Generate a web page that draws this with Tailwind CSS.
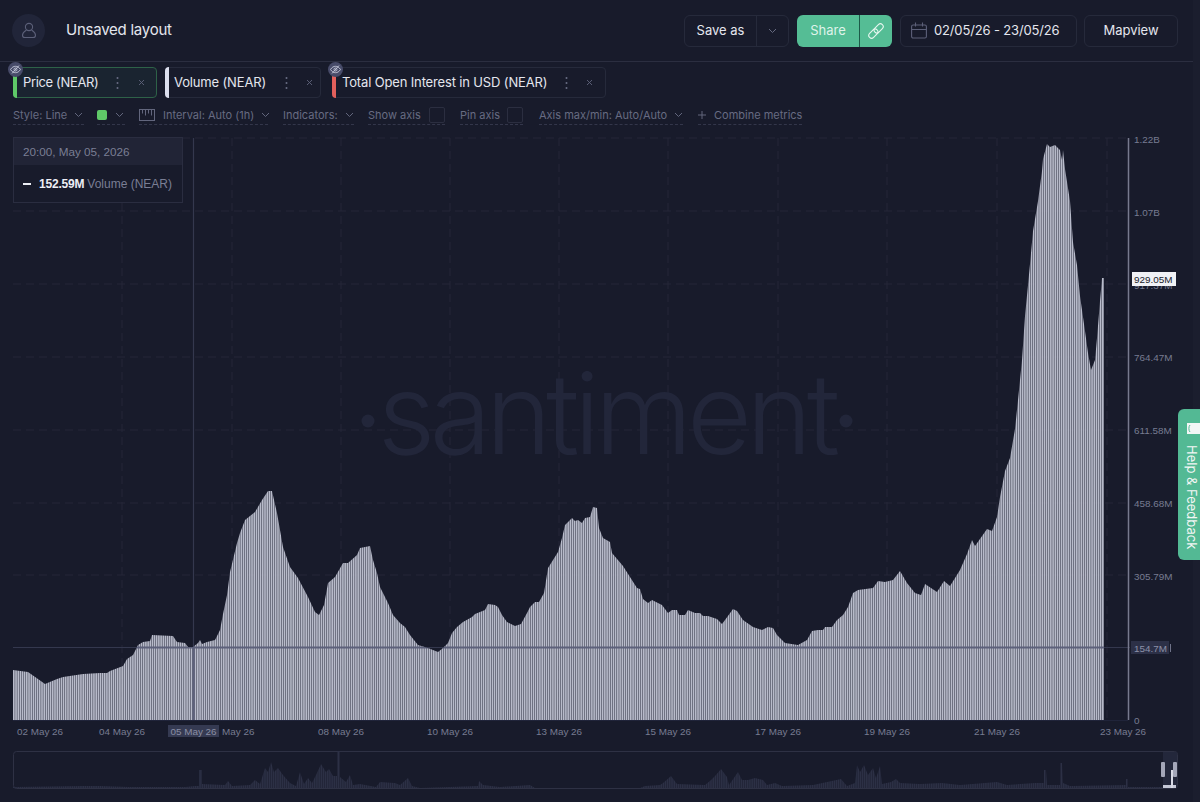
<!DOCTYPE html>
<html>
<head>
<meta charset="utf-8">
<script src="https://cdn.jsdelivr.net/npm/@tailwindcss/browser@4"></script>
</head>
<body class="bg-[#181b2b] overflow-hidden font-['Inter',sans-serif]">
<div class="relative w-[1200px] h-[802px] overflow-hidden flex flex-col">

  <!-- header -->
  <header class="h-[62px] shrink-0 flex items-center pl-[12px] pr-[22px] border-b border-[#2b2e40]">
    <div class="w-[33px] h-[33px] rounded-full bg-[#212539] flex items-center justify-center">
      <svg width="16" height="17" viewBox="0 0 16 17" fill="none" stroke="#5c6079" stroke-width="1.1"><circle cx="8" cy="5" r="3.6"/><path d="M5.4 8C3.6 9.2 1.5 11 1.5 13.2c0 1.4 1 2.3 2.4 2.3h8.2c1.4 0 2.4-.9 2.4-2.3C14.500 11 12.400 9.200 10.600 8"/></svg>
    </div>
    <span class="ml-[21px] text-[15px] text-[#e4e6ee] tracking-[-0.25px]">Unsaved layout</span>
    <div class="ml-auto flex items-center">
      <div class="flex h-[32px] w-[105px] border border-[#262a3b] rounded-[6px] text-[13px] text-[#e4e6ee]">
        <div class="w-[72px] flex items-center justify-center border-r border-[#262a3b]">Save as</div>
        <div class="flex-1 flex items-center justify-center">
          <svg width="9" height="6" viewBox="0 0 9 6" fill="none" stroke="#666a80" stroke-width="1"><path d="M1 1l3.500 3.500L8 1"/></svg>
        </div>
      </div>
      <div class="ml-[8px] flex h-[32px] w-[95px] rounded-[6px] overflow-hidden bg-[#55bd95]">
        <div class="w-[63px] flex items-center justify-center text-[13px] text-[#dff3ea] border-r border-[#1c5a48]">Share</div>
        <div class="flex-1 flex items-center justify-center">
          <svg width="18" height="18" viewBox="0 0 18 18" fill="none" stroke="#e6f6ef" stroke-width="1.100"><g transform="rotate(-45 9 9)"><rect x="0" y="6.200" width="10.500" height="5.600" rx="2.800"/><rect x="7.500" y="6.200" width="10.500" height="5.600" rx="2.800"/></g></svg>
        </div>
      </div>
      <div class="ml-[8px] flex items-center h-[32px] w-[177px] border border-[#262a3b] rounded-[6px] pl-[10px]">
        <svg width="16" height="17" viewBox="0 0 16 17" fill="none" stroke="#5c6079" stroke-width="1.1"><rect x="0.600" y="3" width="14.800" height="13" rx="1.500"/><path d="M0.600 7.500h14.800M4.500 0.500v4M11.500 0.500v4"/></svg>
        <span class="ml-[7px] text-[13px] tracking-[-0.15px] text-[#e4e6ee]">02/05/26 - 23/05/26</span>
      </div>
      <div class="ml-[7px] flex items-center justify-center h-[32px] w-[94px] border border-[#262a3b] rounded-[6px] text-[13px] text-[#e4e6ee]">Mapview</div>
    </div>
  </header>

  <!-- metric tabs -->
  <div class="h-[36px] shrink-0 flex items-end pl-[13px] text-[13px] text-[#e4e6ee]">
    <div class="relative h-[31px] w-[144px] mr-[8px] flex items-center pl-[9px] border border-[#2e6248] rounded-[4px] bg-[#1a2430]">
      <span class="absolute -left-px -top-px -bottom-px w-[4px] rounded-l-[4px] bg-[#5fc968]"></span>
      <span class="tracking-[-0.35px]">Price (NEAR)</span>
      <svg class="absolute left-[102px] top-[8px]" width="3" height="14" viewBox="0 0 3 14" fill="#696d84"><circle cx="1.500" cy="2" r="1"/><circle cx="1.500" cy="7" r="1"/><circle cx="1.500" cy="12" r="1"/></svg>
      <svg class="absolute left-[124px] top-[11px]" width="7" height="7" viewBox="0 0 7 7" stroke="#5f637a" stroke-width="0.900"><path d="M1 1l5 5M6 1l-5 5"/></svg>
      <span class="absolute -left-[6px] -top-[6px] w-[15px] h-[15px] rounded-full bg-[#474b69] flex items-center justify-center">
        <svg width="11" height="9" viewBox="0 0 11 9" fill="none" stroke="#c5c8da" stroke-width="0.900"><path d="M0.500 4.500C2 2.200 3.700 1.300 5.500 1.300S9 2.200 10.500 4.500C9 6.800 7.300 7.700 5.500 7.700S2 6.800 0.500 4.500Z"/><circle cx="5.500" cy="4.500" r="1.500"/><path d="M9 0.500L2 8.500"/></svg>
      </span>
    </div>
    <div class="relative h-[31px] w-[156px] mr-[11px] flex items-center pl-[8px] border border-[#262a3b] rounded-[4px]">
      <span class="absolute -left-px -top-px -bottom-px w-[4px] rounded-l-[4px] bg-[#dcdfee]"></span>
      <span class="tracking-[-0.15px]">Volume (NEAR)</span>
      <svg class="absolute left-[119px] top-[8px]" width="3" height="14" viewBox="0 0 3 14" fill="#696d84"><circle cx="1.500" cy="2" r="1"/><circle cx="1.500" cy="7" r="1"/><circle cx="1.500" cy="12" r="1"/></svg>
      <svg class="absolute left-[140px] top-[11px]" width="7" height="7" viewBox="0 0 7 7" stroke="#5f637a" stroke-width="0.900"><path d="M1 1l5 5M6 1l-5 5"/></svg>
    </div>
    <div class="relative h-[31px] w-[274px] flex items-center pl-[9px] border border-[#262a3b] rounded-[4px]">
      <span class="absolute -left-px -top-px -bottom-px w-[4px] rounded-l-[4px] bg-[#e2605c]"></span>
      <span class="tracking-[-0.15px] whitespace-nowrap">Total Open Interest in USD (NEAR)</span>
      <svg class="absolute left-[232px] top-[8px]" width="3" height="14" viewBox="0 0 3 14" fill="#696d84"><circle cx="1.500" cy="2" r="1"/><circle cx="1.500" cy="7" r="1"/><circle cx="1.500" cy="12" r="1"/></svg>
      <svg class="absolute left-[253px] top-[11px]" width="7" height="7" viewBox="0 0 7 7" stroke="#5f637a" stroke-width="0.900"><path d="M1 1l5 5M6 1l-5 5"/></svg>
      <span class="absolute -left-[5px] -top-[6px] w-[15px] h-[15px] rounded-full bg-[#474b69] flex items-center justify-center">
        <svg width="11" height="9" viewBox="0 0 11 9" fill="none" stroke="#c5c8da" stroke-width="0.900"><path d="M0.500 4.500C2 2.200 3.700 1.300 5.500 1.300S9 2.200 10.500 4.500C9 6.800 7.300 7.700 5.500 7.700S2 6.800 0.500 4.500Z"/><circle cx="5.500" cy="4.500" r="1.500"/><path d="M9 0.500L2 8.500"/></svg>
      </span>
    </div>
  </div>

  <!-- settings row -->
  <div class="h-[30px] shrink-0 flex items-start pt-[8px] pl-[13px] text-[11px] leading-[17px] text-[#676b82] whitespace-nowrap">
    <div class="h-[19px] w-[71px] flex items-center gap-[7px] border-b border-dashed border-[#33364a]"><span>Style: Line</span>
      <svg class="shrink-0" width="9" height="6" viewBox="0 0 9 6" fill="none" stroke="#62667d" stroke-width="1"><path d="M1 1l3.500 3.500L8 1"/></svg></div>
    <div class="ml-[13px] h-[19px] w-[28px] flex items-center gap-[8px] border-b border-dashed border-[#33364a]"><span class="w-[10px] h-[10px] shrink-0 rounded-[2px] bg-[#5fc968]"></span>
      <svg class="shrink-0" width="9" height="6" viewBox="0 0 9 6" fill="none" stroke="#62667d" stroke-width="1"><path d="M1 1l3.500 3.500L8 1"/></svg></div>
    <div class="ml-[14px] h-[19px] w-[129px] flex items-center border-b border-dashed border-[#33364a]">
      <svg class="shrink-0" width="16" height="12" viewBox="0 0 16 12" fill="none" stroke="#62667d" stroke-width="1"><rect x="0.500" y="0.500" width="15" height="11"/><path d="M3.500 0.500v4M6.500 0.500v6M9.500 0.500v4M12.500 0.500v6"/></svg>
      <span class="ml-[8px]">Interval: Auto (1h)</span>
      <svg class="ml-[7px] shrink-0" width="9" height="6" viewBox="0 0 9 6" fill="none" stroke="#62667d" stroke-width="1"><path d="M1 1l3.500 3.500L8 1"/></svg></div>
    <div class="ml-[15px] h-[19px] w-[71px] flex items-center gap-[7px] border-b border-dashed border-[#33364a]"><span>Indicators:</span>
      <svg class="shrink-0" width="9" height="6" viewBox="0 0 9 6" fill="none" stroke="#62667d" stroke-width="1"><path d="M1 1l3.500 3.500L8 1"/></svg></div>
    <div class="ml-[14px] h-[19px] w-[77px] flex items-center justify-between border-b border-dashed border-[#33364a]"><span>Show axis</span><span class="w-[16px] h-[16px] shrink-0 border border-[#2b2e40] rounded-[2px]"></span></div>
    <div class="ml-[15px] h-[19px] w-[63px] flex items-center justify-between border-b border-dashed border-[#33364a]"><span>Pin axis</span><span class="w-[16px] h-[16px] shrink-0 border border-[#2b2e40] rounded-[2px]"></span></div>
    <div class="ml-[16px] h-[19px] w-[144px] flex items-center gap-[7px] border-b border-dashed border-[#33364a]"><span>Axis max/min: Auto/Auto</span>
      <svg class="shrink-0" width="9" height="6" viewBox="0 0 9 6" fill="none" stroke="#62667d" stroke-width="1"><path d="M1 1l3.500 3.500L8 1"/></svg></div>
    <div class="ml-[15px] h-[19px] w-[104px] flex items-center gap-[8px] border-b border-dashed border-[#33364a]">
      <svg class="shrink-0" width="8" height="8" viewBox="0 0 8 8" stroke="#62667d" stroke-width="1"><path d="M4 0v8M0 4h8"/></svg><span>Combine metrics</span></div>
  </div>

  <!-- chart -->
  <div class="relative flex-1">
    <svg class="absolute inset-0" width="1200" height="674" viewBox="0 128 1200 674">
      <defs>
        <clipPath id="vol"><polygon points="13,720 13,670 28,672 38,679 45,684 57,679 63,677 83,674 100,673 107,673 110,671 123,666 127,659 133,655 138,645 143,642 150,641 152,635 173,636 177,642 185,643 188,647 193,647 198,643 200,640 202,644 207,642 215,640 220,630 223,614 227,595 230,572 237,543 240,533 245,520 255,512 262,500 268,491 272,491 277,513 283,547 290,567 298,578 308,597 315,612 319,615 324,605 328,583 335,577 343,563 348,563 357,555 360,548 370,546 373,560 377,573 380,587 388,603 393,615 400,623 405,627 410,635 418,645 428,648 438,652 443,648 448,643 452,633 457,627 463,622 472,617 475,614 485,610 488,604 495,605 498,607 502,615 507,622 515,626 521,624 527,613 530,607 535,602 539,602 544,593 548,568 553,560 558,552 562,538 565,525 572,518 575,521 578,520 582,523 585,518 590,517 593,507 597,508 599,528 603,538 610,542 612,553 623,566 630,577 637,588 640,589 643,599 648,603 652,600 662,605 668,613 672,610 677,610 679,615 685,615 688,610 695,613 700,613 703,616 708,616 717,619 722,624 725,620 733,609 737,611 743,620 753,627 762,630 768,627 773,628 777,635 785,643 798,645 807,640 812,631 818,630 823,630 825,627 832,627 837,620 843,615 848,607 853,593 858,590 873,588 878,581 885,582 893,580 900,571 907,583 915,593 921,595 925,584 937,592 944,581 950,586 960,570 967,554 972,540 975,546 987,529 992,531 997,517 1000,497 1005,471 1010,458 1015,429 1018,400 1022,360 1025,316 1028,285 1030,264 1033,231 1038,201 1042,171 1043,159 1047,144 1050,147 1055,145 1060,150 1062,160 1063,150 1065,169 1070,201 1073,242 1077,265 1080,296 1085,331 1088,353 1091,370 1095,360 1097,338 1100,301 1102,278 1104,278 1104,720"/></clipPath>
        <clipPath id="mini"><polygon points="13,788 13,787 83,786 100,786 130,787 185,787 195,786 199,786 199,770 202,770 202,784 225,785 228,781 232,786 250,785 255,780 260,784 265,768 268,772 271,762 274,772 278,768 283,775 290,783 296,786 300,772 304,784 308,778 312,783 316,775 321,764 326,772 329,769 333,776 337,776 337,751 340,751 340,777 346,782 350,775 353,785 360,784 376,787 380,782 395,783 400,785 408,778 412,786 420,788 478,786 479,781 483,785 500,787 530,785 535,788 640,788 645,786 660,785 663,783 671,776 677,784 705,785 711,780 715,776 721,769 727,777 729,785 738,772 742,780 748,780 755,778 763,780 767,785 775,783 782,786 813,785 841,779 847,786 855,783 857,765 860,772 864,765 868,775 873,768 876,778 880,766 882,784 891,782 896,779 900,783 920,784 942,783 960,785 997,782 1007,785 1035,783 1044,783 1044,770 1046,770 1047,785 1060,785 1060,763 1062,763 1063,783 1070,786 1126,785 1126,779 1128,779 1128,787 1163,787 1163,788"/></clipPath>
      </defs>

      <!-- grid -->
      <g stroke="#242739" stroke-width="1" stroke-dasharray="8 5" fill="none">
        <path d="M13 138H1128M13 211H1128M13 284H1128M13 357H1128M13 430H1128M13 503H1128M13 575H1128"/>
        <path d="M122 138V720M232 138V720M341 138V720M450 138V720M559 138V720M668 138V720M778 138V720M887 138V720M997 138V720M1107 138V720"/>
      </g>

      <!-- watermark -->
      <text x="606" y="454" text-anchor="middle" fill="#22263a" font-family="Inter, sans-serif" font-weight="300" font-size="112" letter-spacing="-5.500">santiment</text>
      <circle cx="368" cy="421" r="6.500" fill="#22263a"/>
      <circle cx="846" cy="421" r="6.500" fill="#22263a"/>

      <!-- volume bars -->
      <g clip-path="url(#vol)">
        <line x1="13" y1="430" x2="1105" y2="430" stroke="#b8bbca" stroke-width="600" stroke-dasharray="1.720 0.445"/>
      </g>

      <!-- crosshair -->
      <path d="M193.500 138V720" stroke="#34384e" stroke-width="1.200"/>
      <path d="M13 647.500H1130" stroke="#34384e" stroke-width="1.200"/>
      <g clip-path="url(#vol)">
        <path d="M193.500 138V720" stroke="#5d617b" stroke-width="2"/>
        <path d="M13 647.500H1130" stroke="#5d617b" stroke-width="2"/>
      </g>

      <!-- axes -->
      <path d="M1128.500 138V720" stroke="#777a8e" stroke-width="1.500"/>
      <path d="M13 720.500H1128" stroke="#20243a" stroke-width="1"/>

      <g font-family="'Liberation Sans', sans-serif" font-size="9.900" fill="#777b91">
        <text x="1134" y="142.500">1.22B</text>
        <text x="1134" y="215.500">1.07B</text>
        <text x="1134" y="288.500">917.37M</text>
        <text x="1134" y="360.500">764.47M</text>
        <text x="1134" y="433.500">611.58M</text>
        <text x="1134" y="506.500">458.68M</text>
        <text x="1134" y="579.500">305.79M</text>
        <text x="1134" y="723.500">0</text>
        <g text-anchor="middle">
          <text x="40" y="735">02 May 26</text>
          <text x="122" y="735">04 May 26</text>
          <text x="222" y="735" text-anchor="start">May 26</text>
          <text x="341" y="735">08 May 26</text>
          <text x="450" y="735">10 May 26</text>
          <text x="559" y="735">13 May 26</text>
          <text x="668" y="735">15 May 26</text>
          <text x="778" y="735">17 May 26</text>
          <text x="887" y="735">19 May 26</text>
          <text x="997" y="735">21 May 26</text>
          <text x="1123" y="735">23 May 26</text>
        </g>
      </g>

      <!-- highlighted axis tags -->
      <rect x="168" y="725" width="51" height="12" fill="#353a52"/>
      <text x="193.500" y="735" text-anchor="middle" font-family="'Liberation Sans', sans-serif" font-size="9.900" fill="#8a8ea4">05 May 26</text>
      <rect x="1131" y="641" width="38" height="13" fill="#2c3047"/>
      <text x="1134" y="651.500" font-family="'Liberation Sans', sans-serif" font-size="9.900" fill="#8d91a7">154.7M</text>
      <rect x="1170" y="644" width="1" height="8" fill="#6f7389"/>
      <rect x="1132" y="272" width="44" height="14" fill="#f0f1f5"/>
      <text x="1134" y="283" font-family="'Liberation Sans', sans-serif" font-size="9.900" fill="#181b2b">929.05M</text>

      <!-- minimap -->
      <rect x="13.500" y="751.500" width="1164" height="37" rx="3" fill="none" stroke="#2e3144"/>
      <g clip-path="url(#mini)">
        <line x1="13" y1="770" x2="1164" y2="770" stroke="#2c3045" stroke-width="40" stroke-dasharray="1.700 0.465"/>
      </g>
      <rect x="1163" y="752" width="14" height="36" fill="#23273b"/>
      <path d="M1163 785h13v3h-13z" fill="#c4c7d6"/>
      <rect x="1171" y="770" width="2" height="18" fill="#d8dae6"/>
      <rect x="1161" y="762" width="4" height="15" rx="1" fill="#a4a7b9"/>
      <rect x="1173" y="762" width="4" height="15" rx="1" fill="#a4a7b9"/>
    </svg>

    <!-- tooltip -->
    <div class="absolute left-[13px] top-[9px] w-[170px] h-[66px] bg-[#181b2b] border border-[#2a2d40] font-['Liberation_Sans',sans-serif] text-[12px]">
      <div class="h-[27px] bg-[#212436] pl-[9px] flex items-center text-[11.700px] text-[#7a7e94]">20:00, May 05, 2026</div>
      <div class="h-[37px] pl-[9px] flex items-center">
        <span class="w-[8px] h-[2px] bg-[#eceef5]"></span>
        <span class="ml-[8px] font-bold tracking-[-0.2px] text-[#eceef5]">152.59M</span>
        <span class="ml-[3px] text-[#7a7e94]">Volume (NEAR)</span>
      </div>
    </div>
  </div>

  <!-- right strip -->
  <div class="absolute right-0 top-0 bottom-0 w-[7px] bg-[#1b1e2e]"></div>

  <!-- help & feedback -->
  <div class="absolute right-0 top-[409px] w-[22px] h-[151px] rounded-l-[6px] bg-[#53b994] flex flex-col items-center">
    <svg class="mt-[14px] ml-[9px] shrink-0" width="13" height="11" viewBox="0 0 13 11"><path d="M0 0h13v11H0z" fill="#f2f6f5"/><path d="M3 2C1.500 3.500 1.500 7.500 3 9" fill="none" stroke="#53b994" stroke-width="1"/></svg>
    <span class="mt-[11px] ml-[6px] [writing-mode:vertical-rl] whitespace-nowrap text-[13px] leading-[22px] text-[#f2f6f5]">Help &amp; Feedback</span>
  </div>
</div>
</body>
</html>
